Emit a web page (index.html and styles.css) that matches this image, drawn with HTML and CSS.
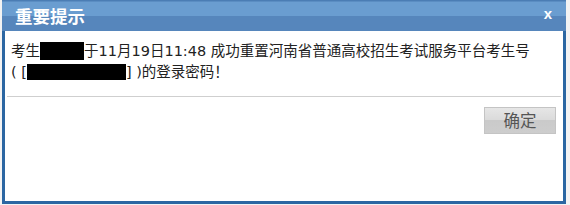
FILE: index.html
```html
<!DOCTYPE html>
<html lang="zh-CN">
<head>
    <meta charset="UTF-8">
    <title>重要提示</title>
    <link rel="stylesheet" href="styles.css">
</head>
<body>
    <div class="page">
        <div class="dialog">
            <div class="dialog-title">
                <span class="title-text">重要提示</span>
                <span class="title-close">x</span>
            </div>
            <div class="dialog-body">
                <div class="dialog-msg">
                    考生<span class="mask mask-name"></span>于11月19日11:48 成功重置河南省普通高校招生考试服务平台考生号<br>
                    ( [<span class="mask mask-no"></span>] )的登录密码！
                </div>
                <div class="divider"></div>
                <div class="dialog-foot">
                    <button class="btn">确定</button>
                </div>
            </div>
        </div>
    </div>
</body>
</html>
```

FILE: styles.css
```css
body {
    margin: 0;
    background: #f3f3f3;
    font-family: "DejaVu Sans", "Noto Sans CJK SC", sans-serif;
}
.page {
    padding-left: 2px;
}
.dialog {
    box-sizing: border-box;
    width: 564px;
    height: 204px;
    background: #fff;
    border: 3px solid #2b66a2;
    border-top: 0;
}
.dialog-title {
    height: 31px;
    margin: 0 -3px;
    display: flex;
    align-items: center;
    justify-content: space-between;
    padding: 0 14px 0 13px;
    background: linear-gradient(#4b7db4 0, #4b7db4 1px, #6a9dd0 2px, #6a9dd0 16px, #5686bc 16px, #5686bc 31px);
    color: #fff;
}
.title-text {
    font-family: "Noto Sans CJK SC", sans-serif;
    font-weight: bold;
    font-size: 17.5px;
    line-height: 31px;
}
.title-close {
    font-family: "Liberation Sans", sans-serif;
    font-weight: bold;
    font-size: 15px;
    margin-top: -4px;
}
.dialog-body {
    padding: 10px 0 0 0;
}
.dialog-msg {
    padding-left: 6px;
    font-size: 14.5px;
    line-height: 21px;
    color: #222;
}
.mask {
    display: inline-block;
    background: #000;
}
.mask-name {
    width: 44px;
    height: 18px;
    vertical-align: -4px;
}
.mask-no {
    width: 99px;
    height: 16px;
    vertical-align: -3px;
}
.divider {
    margin: 13px 2px 0 2px;
    border-top: 1px solid #cfcfcf;
}
.dialog-foot {
    display: flex;
    justify-content: flex-end;
    padding: 10px 7px 0 0;
}
.btn {
    width: 72px;
    height: 27px;
    border: 1px solid #c4c4c4;
    padding: 0;
    background: linear-gradient(#e6e6e6, #dadada 50%, #cacaca 50%, #cdcdcd);
    color: #555;
    font-family: "Noto Sans CJK SC", sans-serif;
    font-size: 16.5px;
    line-height: 25px;
}
```
